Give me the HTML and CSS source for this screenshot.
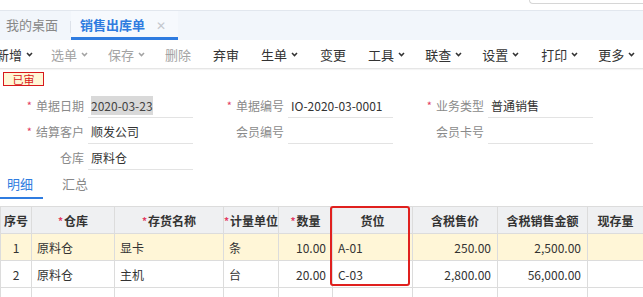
FILE: index.html
```html
<!DOCTYPE html>
<html lang="zh-CN">
<head>
  <meta charset="UTF-8" />
  <meta name="viewport" content="width=device-width, initial-scale=1.0" />
  <title>销售出库单</title>
  <link rel="stylesheet" href="styles.css">
</head>
<body>
  <div class="top-strip">
    <div class="search-edge"></div>
  </div>

  <!-- Page tabs -->
  <div class="tab-bar">
    <div class="page-tab">我的桌面</div>
    <div class="page-tab active">销售出库单<span class="tab-close">&#x2715;</span></div>
  </div>

  <!-- Toolbar -->
  <div class="toolbar">
    <span class="tool first">新增<svg class="chev" viewBox="0 0 7 5"><path d="M1 1 L3.5 3.6 L6 1"/></svg></span>
    <span class="tool off">选单<svg class="chev" viewBox="0 0 7 5"><path d="M1 1 L3.5 3.6 L6 1"/></svg></span>
    <span class="tool off">保存<svg class="chev" viewBox="0 0 7 5"><path d="M1 1 L3.5 3.6 L6 1"/></svg></span>
    <span class="tool off">删除</span>
    <span class="sep"></span>
    <span class="tool">弃审</span>
    <span class="sep"></span>
    <span class="tool">生单<svg class="chev" viewBox="0 0 7 5"><path d="M1 1 L3.5 3.6 L6 1"/></svg></span>
    <span class="sep"></span>
    <span class="tool">变更</span>
    <span class="sep"></span>
    <span class="tool">工具<svg class="chev" viewBox="0 0 7 5"><path d="M1 1 L3.5 3.6 L6 1"/></svg></span>
    <span class="tool">联查<svg class="chev" viewBox="0 0 7 5"><path d="M1 1 L3.5 3.6 L6 1"/></svg></span>
    <span class="tool">设置<svg class="chev" viewBox="0 0 7 5"><path d="M1 1 L3.5 3.6 L6 1"/></svg></span>
    <span class="sep"></span>
    <span class="tool">打印<svg class="chev" viewBox="0 0 7 5"><path d="M1 1 L3.5 3.6 L6 1"/></svg></span>
    <span class="tool">更多<svg class="chev" viewBox="0 0 7 5"><path d="M1 1 L3.5 3.6 L6 1"/></svg></span>
  </div>

  <div class="status">已审</div>

  <!-- Header form -->
  <div class="bill-form">
    <div class="field">
      <label><i>*</i>单据日期</label>
      <div class="value"><span class="hl">2020-03-23</span></div>
    </div>
    <div class="field">
      <label><i>*</i>单据编号</label>
      <div class="value">IO-2020-03-0001</div>
    </div>
    <div class="field">
      <label><i>*</i>业务类型</label>
      <div class="value">普通销售</div>
    </div>

    <div class="field">
      <label><i>*</i>结算客户</label>
      <div class="value">顺发公司</div>
    </div>
    <div class="field">
      <label>会员编号</label>
      <div class="value"></div>
    </div>
    <div class="field">
      <label>会员卡号</label>
      <div class="value"></div>
    </div>

    <div class="field">
      <label>仓库</label>
      <div class="value">原料仓</div>
    </div>
  </div>

  <!-- Detail tabs -->
  <div class="sub-tabs">
    <div class="sub-tab active">明细</div>
    <div class="sub-tab">汇总</div>
  </div>

  <!-- Detail grid -->
  <div class="grid-wrap">
    <table class="grid">
      <colgroup>
        <col style="width:31px">
        <col style="width:83px">
        <col style="width:109px">
        <col style="width:55px">
        <col style="width:54px">
        <col style="width:80px">
        <col style="width:85px">
        <col style="width:90px">
        <col style="width:56px">
      </colgroup>
      <thead>
        <tr>
          <th>序号</th>
          <th><i>*</i>仓库</th>
          <th><i>*</i>存货名称</th>
          <th><i>*</i>计量单位</th>
          <th><i>*</i>数量</th>
          <th>货位</th>
          <th>含税售价</th>
          <th>含税销售金额</th>
          <th>现存量</th>
        </tr>
      </thead>
      <tbody>
        <tr class="current">
          <td class="c">1</td>
          <td>原料仓</td>
          <td>显卡</td>
          <td>条</td>
          <td class="r">10.00</td>
          <td>A-01</td>
          <td class="r">250.00</td>
          <td class="r">2,500.00</td>
          <td></td>
        </tr>
        <tr>
          <td class="c">2</td>
          <td>原料仓</td>
          <td>主机</td>
          <td>台</td>
          <td class="r">20.00</td>
          <td>C-03</td>
          <td class="r">2,800.00</td>
          <td class="r">56,000.00</td>
          <td></td>
        </tr>
        <tr>
          <td class="c">3</td>
          <td></td>
          <td></td>
          <td></td>
          <td></td>
          <td></td>
          <td></td>
          <td></td>
          <td></td>
        </tr>
      </tbody>
    </table>
    <!-- annotation box round the 货位 column -->
    <div class="mark"></div>
  </div>
</body>
</html>
```

FILE: styles.css
```css
/* General */
body {
  margin: 0;
  width: 643px;
  height: 297px;
  overflow: hidden;
  background: #fff;
  font-family: "Noto Sans CJK SC", "Liberation Sans", sans-serif;
  font-size: 12px;
  color: #333;
}

/* Top strip */
.top-strip {
  height: 10px;
  display: flex;
  justify-content: flex-end;
}

.search-edge {
  width: 113px;
  height: 3px;
  border: 1px solid #d6d6d6;
  border-top: none;
  border-right: none;
  border-bottom-left-radius: 4px;
}

/* Page tabs */
.tab-bar {
  height: 29px;
  display: flex;
  align-items: stretch;
  background: #f2f6fb;
  border-top: 1px solid #e2e7ee;
}

.page-tab {
  display: flex;
  align-items: center;
  padding: 0 6px;
  font-size: 13px;
  color: #888;
  border-bottom: 3px solid transparent;
  position: relative;
}

.page-tab:first-child {
  width: 59px;
}

.page-tab:first-child::after {
  content: "";
  position: absolute;
  right: 0;
  top: 10px;
  height: 12px;
  border-right: 1px solid #dde2ea;
}

.page-tab.active {
  width: 92px;
  padding-left: 9px;
  color: #2f7ce0;
  font-weight: bold;
  border-bottom-color: #2f7ce0;
  background: #f6f9fd;
}

.tab-close {
  margin-left: 11px;
  font-size: 12px;
  font-weight: normal;
  color: #c4c8ce;
}

/* Toolbar */
.toolbar {
  height: 28px;
  display: flex;
  align-items: center;
  border-bottom: 1px solid #e6e6e6;
  box-shadow: 0 1px 1px rgba(0, 0, 0, 0.04);
  white-space: nowrap;
}

.tool {
  display: flex;
  align-items: center;
  padding: 0 10px;
  font-size: 13px;
  color: #333;
}

.tool.first {
  margin-left: -14px;
  padding-right: 8px;
}

.tool.off {
  color: #a3a3a3;
}

.chev {
  width: 7px;
  height: 5px;
  margin-left: 4px;
  fill: none;
  stroke: currentColor;
  stroke-width: 1.5;
}

.tool.first .chev {
  stroke: #333;
}

.sep {
  width: 1px;
  height: 14px;
  margin: 0 1px;
  background: #dedede;
}

/* Status stamp */
.status {
  width: 39px;
  height: 12px;
  margin: 3px 0 0 3px;
  border: 1px solid #d7191c;
  background: #fff7d6;
  color: #d7191c;
  font-size: 11px;
  line-height: 12px;
  text-align: center;
}

/* Header form */
.bill-form {
  margin-top: 6px;
  display: grid;
  grid-template-columns: 200px 200px 200px;
  grid-auto-rows: 26px;
}

.field {
  display: flex;
  align-items: center;
}

.field label {
  width: 84px;
  margin-right: 4px;
  text-align: right;
  color: #8a8a8a;
  font-size: 12px;
}

.field label i,
.grid th i {
  font-style: normal;
  color: #e23a62;
  margin-right: 4px;
  font-size: 11px;
  position: relative;
  top: -1px;
}

.grid th i {
  margin-right: 1px;
  font-size: 10px;
}

.field .value {
  width: 105px;
  height: 25px;
  line-height: 25px;
  padding-left: 3px;
  box-sizing: border-box;
  border-bottom: 1px solid #e3e3e3;
  color: #333;
  font-size: 12px;
}

.hl {
  background: #d9d9d9;
  color: #444;
  padding: 1px 0;
}

/* Detail tabs */
.sub-tabs {
  display: flex;
  height: 28px;
  margin-top: 1px;
}

.sub-tab {
  width: 43px;
  padding-left: 7px;
  box-sizing: border-box;
  line-height: 26px;
  font-size: 13px;
  color: #888;
  margin-right: 12px;
  border-bottom: 2px solid transparent;
}

.sub-tab.active {
  color: #2f7ce0;
  border-bottom-color: #2f7ce0;
}

/* Detail grid */
.grid-wrap {
  position: relative;
  margin-top: 7px;
}

.grid {
  border-collapse: collapse;
  table-layout: fixed;
  width: 643px;
}

.grid th,
.grid td {
  border: 1px solid #dcdcdc;
  height: 26px;
  padding: 0 5px;
  white-space: nowrap;
  overflow: hidden;
  font-size: 12px;
}

.grid th {
  background: #eff0f2;
  font-weight: bold;
  color: #333;
  text-align: center;
  padding: 0;
}

.grid td.c {
  text-align: center;
}

.grid td.r {
  text-align: right;
  padding-right: 6px;
}

.grid tr.current td {
  background: #fff6d7;
}

.mark {
  position: absolute;
  left: 330px;
  top: 0;
  width: 76px;
  height: 76px;
  border: 2px solid #e0201e;
  border-radius: 3px;
}
```
